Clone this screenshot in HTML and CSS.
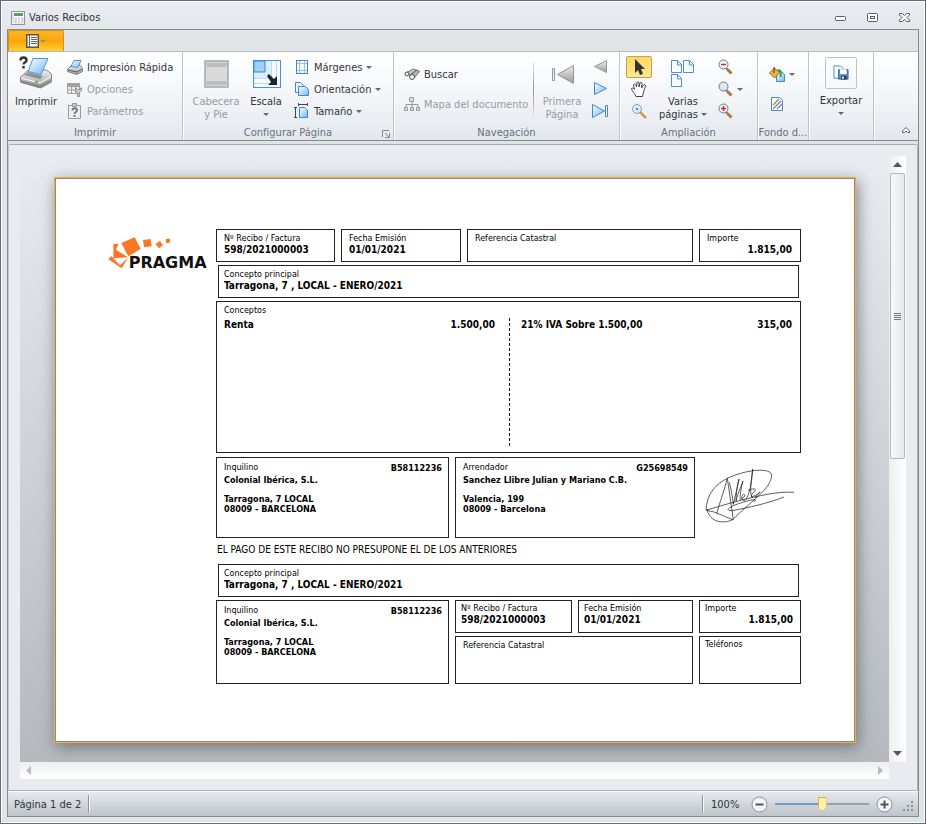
FILE: index.html
```html
<!DOCTYPE html>
<html lang="es">
  <head>
    <meta charset="UTF-8" />
    <meta name="viewport" content="width=device-width, initial-scale=1.0" />
    <title>Varios Recibos</title>
    <link rel="stylesheet" href="styles.css">
  </head>
  <body>
    <!-- shared gradients -->
    <svg class="defs" width="0" height="0" aria-hidden="true">
      <defs>
        <linearGradient id="blue" x1="0" y1="0" x2="1" y2="1">
          <stop offset="0" stop-color="#fff" /><stop offset="1" stop-color="#6db9f6" />
        </linearGradient>
        <linearGradient id="grey" x1="0" y1="0" x2="0" y2="1">
          <stop offset="0" stop-color="#f0f0f0" /><stop offset="1" stop-color="#989898" />
        </linearGradient>
      </defs>
    </svg>

    <header class="titlebar">
      <svg width="14" height="14" viewBox="0 0 14 14">
        <rect x=".5" y=".5" width="13" height="13" fill="#fff" stroke="#8b98a4" />
        <path d="M3 2h9v3H3z" fill="#5f9b6b" />
        <path d="M2 2v10M4 7h8v5H4z" stroke="#c3ccd5" fill="#d6dde4" />
        <path d="M6.500 7v5M9.500 7v5" stroke="#fff" />
      </svg>
      <h1>Varios Recibos</h1>
      <div class="caption">
        <button type="button" aria-label="Minimizar">
          <svg width="13" height="13"><rect x="1.500" y="5.500" width="10" height="4" rx="1" fill="#fff" stroke="#555c66" /></svg>
        </button>
        <button type="button" aria-label="Maximizar">
          <svg width="13" height="13"><rect x="1.500" y="2.500" width="10" height="8" rx="1" fill="#fff" stroke="#555c66" /><rect x="4.500" y="5.500" width="4" height="2" fill="#fff" stroke="#555c66" /></svg>
        </button>
        <button type="button" aria-label="Cerrar">
          <svg width="13" height="13"><path d="M1.500 2.500h3l2 2 2-2h3v1.500l-2.500 2.500 2.500 2.500v1.500h-3l-2-2-2 2h-3V9L4 6.500 1.500 4z" fill="#fff" stroke="#555c66" /></svg>
        </button>
      </div>
    </header>

    <main class="client">
      <div class="tabs">
        <button type="button" class="app-tab" aria-label="Archivo">
          <svg width="20" height="14">
            <rect x=".75" y=".75" width="11.500" height="12.500" fill="#fff" stroke="#5b554a" stroke-width="1.500" />
            <path d="M3.500 1v12M5 3.500h6M5 5.500h6M5 7.500h6M5 9.500h6" stroke="#6b655a" />
            <path d="M14 6h6l-3 3z" fill="#9c8f6c" />
          </svg>
        </button>
      </div>

      <div class="ribbon">
        <section class="group g-print">
          <div class="tools">
            <button type="button" class="big w56">
              <svg width="34" height="34" viewBox="0 0 34 34">
                <path d="M1.500 21l8-7h18l5 4v8l-11 6-20-6z" fill="url(#grey)" stroke="#858585" />
                <path d="M2 22l19 5 11-7" fill="none" stroke="#fff" />
                <path d="M2 24l19 5v3L2 27zM21 29l11-6v3l-11 6z" fill="#707070" opacity=".5" />
                <path d="M14 2.500h15l-7 16-13-3z" fill="url(#blue)" stroke="#5596d2" />
                <path d="M5 19l4-3 15 4-3 3z" fill="#4a4d50" opacity=".5" />
                <circle cx="17.500" cy="26" r="1.500" fill="#62b552" />
                <path d="M1.500 4.500c0-4 6-4 6 0 0 2-3 1.500-3 4M4.500 10v2.500" fill="none" stroke="#333" stroke-width="2.500" />
              </svg>
              <span>Imprimir</span>
            </button>
            <div class="stack">
              <button type="button" class="small">
                <svg width="16" height="16" viewBox="0 0 16 16">
                  <path d="M.5 10.500l4-4h9l2 3v3l-6 3-9-3z" fill="url(#grey)" stroke="#808080" />
                  <path d="M7 1.500h7l-3 7-7-1z" fill="url(#blue)" stroke="#5596d2" />
                  <path d="M1 11l9 2 5-3" fill="none" stroke="#555" />
                </svg>
                Impresión Rápida
              </button>
              <button type="button" class="small" disabled>
                <svg width="16" height="16" viewBox="0 0 16 16">
                  <path d="M.5 2.500h12v10H.5zM1 5.500h12M1 9h9M4.500 3v9M8.500 3v9" fill="#ececec" stroke="#a2a2a2" />
                  <path d="M0 2h13v3H0z" fill="#a2a2a2" />
                  <path d="M8.500 6.500v3l2 2v4h2v-4l2-2v-3l-2 2h-2z" fill="#ccc" stroke="#8f8f8f" />
                </svg>
                Opciones
              </button>
              <button type="button" class="small" disabled>
                <svg width="16" height="16" viewBox="0 0 16 16">
                  <path d="M1.500 2.500h12v13h-12z" fill="#eee" stroke="#999" />
                  <path d="M5.500.5h4v3h-4z" fill="#ccc" stroke="#999" />
                  <path d="M5.500 7.500c0-3 4.500-3 4.500 0C10 9 7.500 9 7.500 11M7.500 12v2" fill="none" stroke="#777" stroke-width="1.800" />
                </svg>
                Parámetros
              </button>
            </div>
          </div>
          <h2>Imprimir</h2>
        </section>

        <section class="group g-setup">
          <div class="tools">
            <button type="button" class="big w52" disabled>
              <svg width="34" height="34" viewBox="0 0 34 34">
                <rect x="6" y="5" width="23" height="26" fill="#d9d9d9" stroke="#a6a6a6" stroke-width="1.500" />
                <path d="M7.500 7h20v4h-20zM7.500 25h20v4h-20z" fill="#bcbcbc" />
              </svg>
              <span>Cabecera<br />y Pie</span>
            </button>
            <button type="button" class="big w48">
              <svg width="34" height="34" viewBox="0 0 34 34">
                <rect x="4.500" y="4.500" width="27" height="27" fill="#f4faff" stroke="#4a90cf" />
                <path d="M5 5h18v18H5z" fill="#d9edfc" />
                <path d="M22.500 5v17.500H5M27.500 5v20M5 27.500h16" fill="none" stroke="#bbdcf5" />
                <path d="M5 5h11v11H5z" fill="#9ed0fa" stroke="#3c86cb" />
                <path d="M18 20l2-2 5 5 3-3v9h-9l3-3z" fill="#222" />
              </svg>
              <span>Escala</span>
              <i class="arrow"></i>
            </button>
            <div class="stack">
              <button type="button" class="small">
                <svg width="16" height="16" viewBox="0 0 16 16">
                  <rect x="2.500" y="1.500" width="11" height="13" fill="#f5faff" stroke="#4587c4" />
                  <path d="M5.500 2v12M10.500 2v12M3 4.500h10M3 11.500h10" stroke="#9bbfe0" />
                </svg>
                Márgenes <i class="arrow"></i>
              </button>
              <button type="button" class="small">
                <svg width="16" height="16" viewBox="0 0 16 16">
                  <path d="M1.500 1.500h5l3 3v7h-8z" fill="#eaf5ff" stroke="#4587c4" />
                  <path d="M4.500 5.500h7l3 3v6h-10z" fill="url(#blue)" stroke="#4587c4" />
                </svg>
                Orientación <i class="arrow"></i>
              </button>
              <button type="button" class="small">
                <svg width="16" height="16" viewBox="0 0 16 16">
                  <path d="M4.500 1.500h9M4.500 0v3M13.500 0v3M1.500 4v11M0 4.500h3M0 14.500h3" stroke="#444" />
                  <path d="M5.500 4.500h5l3 3v7h-8z" fill="url(#blue)" stroke="#3c86cb" />
                </svg>
                Tamaño <i class="arrow"></i>
              </button>
            </div>
          </div>
          <h2>Configurar Página</h2>
          <button type="button" class="launcher" aria-label="Más opciones">
            <svg width="8" height="8"><path d="M.5 7V.5H7M3 3l4 4M7.500 3v4.500H3" fill="none" stroke="#848b95" /></svg>
          </button>
        </section>

        <section class="group g-nav">
          <div class="tools">
            <div class="stack two find">
              <button type="button" class="small">
                <svg width="16" height="16" viewBox="0 0 16 16">
                  <path d="M1.500 7l8-4 3 1-7 5z" fill="#ccc" stroke="#777" />
                  <path d="M6 10l7-6 2.500 1.500L10 12z" fill="#b5b5b5" stroke="#666" />
                  <circle cx="3" cy="8" r="2" fill="#eee" stroke="#555" />
                  <circle cx="8" cy="11" r="2.500" fill="#eee" stroke="#555" />
                </svg>
                Buscar
              </button>
              <button type="button" class="small" disabled>
                <svg width="16" height="16" viewBox="0 0 16 16">
                  <path d="M5.500 1.500h4v4h-4zM.5 11.500h3v3h-3zM6.500 11.500h3v3h-3zM12.500 11.500h3v3h-3z" fill="#ddd" stroke="#999" />
                  <path d="M8 6v5M2 11V8.500h12V11" fill="none" stroke="#999" />
                </svg>
                Mapa del documento
              </button>
            </div>
            <div class="divider"></div>
            <button type="button" class="big w48" disabled>
              <svg width="34" height="34" viewBox="0 0 34 34">
                <path d="M7.500 12.500h2v12h-2z" fill="#eee" stroke="#999" />
                <path d="M28.500 9.500v18l-16-9z" fill="url(#grey)" stroke="#949494" />
              </svg>
              <span>Primera<br />Página</span>
            </button>
            <div class="stack steps">
              <button type="button" class="small icon" disabled aria-label="Página anterior">
                <svg width="16" height="16" viewBox="0 0 16 16"><path d="M14.500 1.500v12L2.500 7.500z" fill="url(#grey)" stroke="#999" /></svg>
              </button>
              <button type="button" class="small icon" aria-label="Página siguiente">
                <svg width="16" height="16" viewBox="0 0 16 16"><path d="M2.500 1.500v12l12-6z" fill="url(#blue)" stroke="#3f88cf" /></svg>
              </button>
              <button type="button" class="small icon" aria-label="Última página">
                <svg width="16" height="16" viewBox="0 0 16 16"><path d="M.5 1.500v13l12-6.500z" fill="url(#blue)" stroke="#3f88cf" /><path d="M13.500 2.500h2v11h-2z" fill="#fff" stroke="#3f88cf" /></svg>
              </button>
            </div>
          </div>
          <h2>Navegación</h2>
        </section>

        <section class="group g-zoom">
          <div class="tools">
            <div class="stack pointers">
              <button type="button" class="small icon active" aria-label="Puntero" aria-pressed="true">
                <svg width="16" height="16" viewBox="0 0 16 16"><path d="M4 0v14l3-3 2 5 3-1-2-5h4z" fill="#333" /></svg>
              </button>
              <button type="button" class="small icon" aria-label="Mano">
                <svg width="16" height="16" viewBox="0 0 16 16"><path d="M5 15.500c-1-3-4-5-4.500-8 1-1 2 0 3 1L2.500 4C3 2 4.500 3 5 4l.5 2L6 1.500C6.500.3 8 .5 8 2v4l1-4c.7-1.200 2-.7 2 .5L10.500 7l2-3c1-1 2.300 0 2 1-1 3-2 6-3 10.500z" fill="#fff" stroke="#444" /></svg>
              </button>
              <button type="button" class="small icon" aria-label="Lupa">
                <svg width="16" height="16" viewBox="0 0 16 16"><path d="M9 9l6 6" stroke="#c99e4e" stroke-width="2.500" /><circle cx="6" cy="6" r="4.500" fill="#d6ebfc" stroke="#929ba8" /><path d="M5 5h2v2H5z" fill="#4385c0" /></svg>
              </button>
            </div>
            <button type="button" class="big w56">
              <svg width="34" height="34" viewBox="0 0 34 34">
                <path d="M5.500 4.500h6l4 4v8h-10zM17.500 4.500h6l4 4v8h-10zM5.500 18.500h6l4 4v8h-10z" fill="#f7fbff" stroke="#4f8fce" />
                <path d="M11.500 5v4h4M23.500 5v4h4M11.500 19v4h4" fill="none" stroke="#4f8fce" />
              </svg>
              <span>Varias<br />páginas <i class="arrow"></i></span>
            </button>
            <div class="stack">
              <button type="button" class="small" aria-label="Alejar">
                <svg width="16" height="16" viewBox="0 0 16 16"><path d="M9 9l2 2" stroke="#777" stroke-width="2" /><path d="M10.500 10.500l4 4" stroke="#a77c39" stroke-width="3" /><circle cx="6.500" cy="5.500" r="4.500" fill="#eef4fb" stroke="#737a85" /><path d="M4 5.500h5" stroke="#c2302f" stroke-width="1.500" /></svg>
              </button>
              <button type="button" class="small" aria-label="Zoom">
                <svg width="16" height="16" viewBox="0 0 16 16"><path d="M9 9l2 2" stroke="#777" stroke-width="2" /><path d="M10.500 10.500l4 4" stroke="#a77c39" stroke-width="3" /><circle cx="6.500" cy="5.500" r="4.500" fill="#d9e9f8" stroke="#737a85" /></svg>
                <i class="arrow"></i>
              </button>
              <button type="button" class="small" aria-label="Acercar">
                <svg width="16" height="16" viewBox="0 0 16 16"><path d="M9 9l2 2" stroke="#777" stroke-width="2" /><path d="M10.500 10.500l4 4" stroke="#a77c39" stroke-width="3" /><circle cx="6.500" cy="5.500" r="4.500" fill="#eef4fb" stroke="#737a85" /><path d="M4 5.500h5M6.500 3v5" stroke="#c2302f" stroke-width="1.500" /></svg>
              </button>
            </div>
          </div>
          <h2>Ampliación</h2>
        </section>

        <section class="group g-back">
          <div class="tools">
            <div class="stack two">
              <button type="button" class="small" aria-label="Color de página">
                <svg width="16" height="16" viewBox="0 0 16 16">
                  <path d="M7.500 5.500h5l3 3v7h-8z" fill="url(#blue)" stroke="#4587c4" />
                  <path d="M.5 7l5-5 5 4.500-5 5.500z" fill="#f3b13c" stroke="#99671c" />
                  <path d="M5 7V1" stroke="#333" />
                  <path d="M9 4c3 0 3 3 2.500 7" stroke="#45993e" stroke-width="2" fill="none" />
                </svg>
                <i class="arrow"></i>
              </button>
              <button type="button" class="small" aria-label="Marca de agua">
                <svg width="16" height="16" viewBox="0 0 16 16">
                  <path d="M2.500 1.500h8l3 3v10h-11z" fill="#fff" stroke="#4587c4" />
                  <path d="M4 9l6-6M4 13l8-8M8 13l5-5" stroke="#8b8b8b" stroke-width="1.500" />
                </svg>
              </button>
            </div>
          </div>
          <h2 title="Fondo de página">Fondo d...</h2>
        </section>

        <section class="group g-export">
          <div class="tools">
            <button type="button" class="big framed w64">
              <svg width="32" height="32" viewBox="0 0 32 32">
                <path d="M8.500 8.500h7l4 4v9h-11z" fill="#fff" stroke="#3c86cb" />
                <path d="M13.500 12.500h10v10h-10z" fill="#5b9bd5" stroke="#26598f" />
                <path d="M15 12h7v5h-7z" fill="#fff" /><path d="M16 19h6v4h-6z" fill="#2b3f55" /><path d="M17 20h2v2h-2z" fill="#fff" />
              </svg>
              <span>Exportar</span>
              <i class="arrow"></i>
            </button>
          </div>
        </section>

        <button type="button" class="collapse" aria-label="Contraer cinta">
          <svg width="10" height="8"><path d="M1.500 5L5 1.500 8.500 5v1.500h-2L5 5 3.500 6.500h-2z" fill="#fff" stroke="#555c66" /></svg>
        </button>
      </div>

      <div class="viewer">
        <div class="viewport">
          <article class="paper">
            <svg class="logo" width="100" height="32" viewBox="324 290 300 96">
              <g fill="#ff7526">
                <path d="M364 308l40-17 18 35-37 22z" />
                <path d="M340 311l16-1-8 18 36 23-44 3z" />
                <path d="M325 357l9-10 26 28 24-23-19 32z" />
                <path d="M429 299l23-3 3 22-23 3zM466 311l14-9 9 13-12 9zM498 296l12-1v12l-12 1z" />
              </g>
              <text x="386" y="384">PRAGMA</text>
            </svg>

            <div class="receipt">
              <div class="row head">
                <div class="box"><small>Nº Recibo / Factura</small><b>598/2021000003</b></div>
                <div class="box"><small>Fecha Emisión</small><b>01/01/2021</b></div>
                <div class="box"><small>Referencia Catastral</small></div>
                <div class="box"><small>Importe</small><b class="amount">1.815,00</b></div>
              </div>
              <div class="box concept"><small>Concepto principal</small><b>Tarragona, 7 , LOCAL - ENERO/2021</b></div>
              <div class="box items">
                <small>Conceptos</small>
                <div class="lines">
                  <p><b>Renta</b><b>1.500,00</b></p>
                  <p><b>21% IVA Sobre 1.500,00</b><b>315,00</b></p>
                </div>
              </div>
              <div class="row parties">
                <div class="box party">
                  <p><small>Inquilino</small><b>B58112236</b></p>
                  <b>Colonial Ibérica, S.L.</b>
                  <address>Tarragona, 7 LOCAL<br />08009 - BARCELONA</address>
                </div>
                <div class="box party">
                  <p><small>Arrendador</small><b>G25698549</b></p>
                  <b>Sanchez Llibre Julian y Mariano C.B.</b>
                  <address>Valencia, 199<br />08009 - Barcelona</address>
                </div>
                <svg class="sign" width="90" height="55" viewBox="765 55 270 165" role="img" aria-label="Firma">
                  <g fill="none" stroke="#222" stroke-width="2.200">
                    <path d="M1032 128c-50-4-110 12-160 24-45 12-80 22-104 30 2-50 30-80 66-97 50-24 130-34 131-8 0 40-70 84-116 132-20 12-52 10-66-6-8-10-12-18-11-25" />
                    <path d="M832 86l18 124M832 86c-10 40-24 75-32 106M770 182c30 4 50 18 80 29" />
                    <path d="M838 98c6 24 10 46 12 66 4-20 12-50 17-76-6 24-9 46-9 66 4-20 14-40 21-60-6 20-10 46-8 58M874 148c8-4 14-12 8-14-8 0-10 20 2 18 10-4 22-48 24-94-4 30-10 74-2 86M894 122c14-6 28-6 20 2s-16 20-4 16 26-20 18-10-18 14-8 14M1002 142c-50 20-110 32-150 40-30 4-20-10 20-22 30-10 54-14 40-4" />
                  </g>
                </svg>
              </div>
              <p class="notice">EL PAGO DE ESTE RECIBO NO PRESUPONE EL DE LOS ANTERIORES</p>
              <div class="box concept"><small>Concepto principal</small><b>Tarragona, 7 , LOCAL - ENERO/2021</b></div>
              <div class="row stub">
                <div class="box party">
                  <p><small>Inquilino</small><b>B58112236</b></p>
                  <b>Colonial Ibérica, S.L.</b>
                  <address>Tarragona, 7 LOCAL<br />08009 - BARCELONA</address>
                </div>
                <div class="box near"><small>Nº Recibo / Factura</small><b>598/2021000003</b></div>
                <div class="box near"><small>Fecha Emisión</small><b>01/01/2021</b></div>
                <div class="box near"><small>Importe</small><b class="amount">1.815,00</b></div>
                <div class="box ref"><small>Referencia Catastral</small></div>
                <div class="box near"><small>Teléfonos</small></div>
              </div>
            </div>
          </article>
        </div>

        <div class="vscroll">
          <svg width="17" height="17"><path d="M4 11h9L8.500 6z" fill="#555" /></svg>
          <div class="track"><div class="thumb"></div></div>
          <svg width="17" height="17"><path d="M4 6h9l-4.500 5z" fill="#555" /></svg>
        </div>
        <div class="hscroll">
          <svg width="17" height="17"><path d="M11 4v9L6 8.500z" fill="#bbb" /></svg>
          <svg width="17" height="17"><path d="M6 4v9l5-4.500z" fill="#bbb" /></svg>
        </div>
      </div>

      <footer class="status">
        <span>Página 1 de 2</span>
        <i class="sep"></i>
        <i class="sep right"></i>
        <label for="zoom">100%</label>
        <button type="button" class="round" aria-label="Reducir zoom">
          <svg width="17" height="17"><circle cx="8.500" cy="8.500" r="7.500" fill="#f3f4f6" stroke="#8c8fa3" /><path d="M4.500 8.500h8" stroke="#50555d" stroke-width="2" /></svg>
        </button>
        <input type="range" id="zoom" min="0" max="200" value="100" />
        <button type="button" class="round" aria-label="Aumentar zoom">
          <svg width="17" height="17"><circle cx="8.500" cy="8.500" r="7.500" fill="#f3f4f6" stroke="#8c8fa3" /><path d="M4.500 8.500h8M8.500 4.500v8" stroke="#50555d" stroke-width="2" /></svg>
        </button>
        <svg class="grip" width="12" height="12"><path d="M8 0h2v2H8zM8 4h2v2H8zM4 4h2v2H4zM8 8h2v2H8zM4 8h2v2H4zM0 8h2v2H0z" fill="#8f949b" /></svg>
      </footer>
    </main>
  </body>
</html>
```
FILE: styles.css
```css
* {
  box-sizing: border-box;
}
body {
  display: flex;
  flex-direction: column;
  min-height: 100vh;
  margin: 0;
  padding: 0 6px 6px;
  border: 1px solid #646b76;
  box-shadow: inset 0 0 0 1px #fff;
  background: linear-gradient(#ebedf2, #e0e4e6 40px);
  color: #30343b;
  font-family: "DejaVu Sans Condensed", "DejaVu Sans", sans-serif;
  font-size: 11px;
  line-height: 13px;
}
.defs {
  position: absolute;
}
svg {
  display: block;
  flex: none;
}
h1,
h2,
p {
  margin: 0;
  font-size: 11px;
  font-weight: normal;
}
button {
  margin: 0;
  padding: 0;
  border: 0;
  background: none;
  color: inherit;
  font: inherit;
  cursor: pointer;
}
button:disabled {
  color: #989b9f;
  cursor: default;
}

/* title bar */
.titlebar {
  display: flex;
  align-items: center;
  gap: 4px;
  height: 28px;
  padding: 5px 0 0 4px;
}
.caption {
  display: flex;
  gap: 19px;
  margin-left: auto;
  padding-right: 8px;
}
.client {
  display: flex;
  flex-direction: column;
  flex: 1;
  border: 1px solid #858b8d;
}

/* ribbon */
.tabs {
  height: 21px;
  background: #e0e4e6;
}
.app-tab {
  display: flex;
  align-items: center;
  justify-content: center;
  width: 56px;
  height: 21px;
  border: 1px solid #e08a1e;
  border-bottom: 0;
  border-radius: 2px 2px 0 0;
  background: linear-gradient(#fbb62d, #fba50a 50%, #ffd02e);
}
.ribbon {
  display: flex;
  height: 90px;
  border-top: 1px solid #b6bbc1;
  border-bottom: 1px solid #85898f;
  background: linear-gradient(#fff, #f3f5f8 50%, #e3e7ec);
}
.group {
  position: relative;
  display: flex;
  flex-direction: column;
  flex: none;
  border-right: 1px solid #c0c4ca;
  box-shadow: 1px 0 #fff;
}
.group h2 {
  height: 14px;
  color: #696f80;
  text-align: center;
  white-space: nowrap;
}
.tools {
  display: flex;
  height: 74px;
  padding-top: 4px;
}
.g-print {
  width: 175px;
}
.g-setup {
  width: 211px;
}
.g-nav {
  width: 226px;
}
.g-zoom {
  width: 138px;
}
.g-back {
  width: 51px;
}
.g-export {
  width: 65px;
}
.g-setup .tools,
.g-nav .tools,
.g-back .tools {
  padding-left: 7px;
}
.g-zoom .tools {
  gap: 3px;
  padding-left: 6px;
}
.g-setup .stack,
.g-back .stack {
  margin-left: 1px;
}
.big {
  display: flex;
  flex-direction: column;
  align-items: center;
}
.big span {
  margin-top: 5px;
  white-space: nowrap;
}
.w48 {
  width: 48px;
}
.w52 {
  width: 52px;
}
.w56 {
  width: 56px;
}
.w64 {
  width: 64px;
}
.framed svg {
  margin-top: 1px;
  border: 1px solid #bfc3c9;
  border-radius: 2px;
}
.small {
  display: flex;
  align-items: center;
  gap: 4px;
  height: 22px;
  padding: 0 3px;
  white-space: nowrap;
}
.icon {
  justify-content: center;
  width: 100%;
}
.two {
  padding-top: 3px;
}
.two .small {
  height: 30px;
}
.find {
  width: 132px;
}
.steps {
  width: 28px;
}
.pointers {
  width: 26px;
}
.divider {
  width: 1px;
  height: 56px;
  margin: 6px 4px 0 0;
  background: linear-gradient(#e4e6e9, #8d9299, #e4e6e9);
}
.active {
  border: 1px solid #c3a14c;
  border-radius: 2px;
  background: linear-gradient(#ffd765, #ffe793);
}
.arrow {
  display: inline-block;
  border: 3px solid transparent;
  border-top-color: #62666d;
  border-bottom: 0;
  vertical-align: 2px;
}
.big > .arrow {
  margin-top: 5px;
}
.launcher {
  position: absolute;
  right: 3px;
  bottom: 2px;
}
.collapse {
  align-self: flex-end;
  margin: 0 7px 6px auto;
}

/* preview area */
.viewer {
  display: grid;
  grid-template-columns: 1fr 17px;
  grid-template-rows: 1fr 17px;
  flex: 1;
  margin-top: 3px;
  padding: 11px;
  border: 1px solid #a9aeb6;
  border-left-color: #c3c7cd;
  border-radius: 2px;
  background: #e8ebf0;
}
.viewport {
  padding: 21px 33px 19px 34px;
  overflow: hidden;
  background: linear-gradient(#e8ebf0, #b5b9bd);
}
.paper {
  display: flex;
  gap: 8px;
  padding: 51px 54px 58px 53px;
  border: 1px solid #f5b02a;
  background: #fff;
  box-shadow: inset 0 0 0 1px #858b93, 2px 4px 14px rgba(75, 80, 84, 0.65);
  color: #000;
}
.logo {
  margin-top: 8px;
  overflow: visible;
}
.logo text {
  fill: #111;
  font: bold 48px "DejaVu Sans", sans-serif;
}
.receipt {
  display: flex;
  flex-direction: column;
  flex: 1;
  gap: 3px;
  font-size: 10px;
}
.row {
  display: grid;
  gap: 6px;
}
.head {
  grid-template-columns: 119px 120px 1fr 102px;
}
.parties {
  grid-template-columns: 233px 240px 1fr;
  margin-top: 1px;
}
.stub {
  grid-template-columns: 233px 117px 1fr 102px;
  grid-template-rows: 33px 48px;
  row-gap: 3px;
}
.stub .party {
  grid-row: span 2;
}
.ref {
  grid-column: span 2;
}
.box {
  display: flex;
  flex-direction: column;
  min-height: 33px;
  padding: 4px 8px 3px 7px;
  border: 1px solid #222;
  line-height: 12px;
}
.box small {
  font-family: "DejaVu Sans", sans-serif;
  font-size: 8px;
  line-height: 10px;
}
.near {
  padding: 3px 7px 3px 5px;
}
.amount {
  align-self: flex-end;
}
.concept {
  margin: 0 2px;
  padding-left: 5px;
}
.items {
  height: 152px;
}
.lines {
  display: grid;
  grid-template-columns: 285px 1fr;
  flex: 1;
  margin: 2px 0 3px;
}
.lines p {
  display: flex;
  justify-content: space-between;
  padding: 1px 14px 0 0;
  font-size: 10px;
}
.lines p + p {
  padding: 1px 0 0 11px;
  border-left: 1px dashed #000;
}
.party {
  min-height: 81px;
  padding: 4px 6px 4px 7px;
  font-size: 9px;
}
.party p {
  display: flex;
  align-items: center;
  justify-content: space-between;
  font-size: 9px;
}
.party address {
  margin-top: 8px;
  font-style: normal;
  font-weight: bold;
  line-height: 10px;
}
.sign {
  margin: 11px 0 0 4px;
}
.notice {
  margin: 2px 0 5px 1px;
  font-size: 10px;
  line-height: 13px;
}

/* scroll bars */
.vscroll {
  display: flex;
  flex-direction: column;
  background: linear-gradient(90deg, #eee, #fff);
}
.track {
  flex: 1;
  padding: 0 1px;
}
.thumb {
  display: flex;
  align-items: center;
  justify-content: center;
  height: 50%;
  border: 1px solid #b3b7bc;
  border-radius: 2px;
  background: linear-gradient(90deg, #f8f8f8, #e6e9e8);
}
.thumb::before {
  content: "";
  width: 7px;
  height: 7px;
  background: repeating-linear-gradient(#777 0 1px, transparent 1px 2px);
}
.hscroll {
  display: flex;
  justify-content: space-between;
  background: linear-gradient(#eee, #fff);
}

/* status bar */
.status {
  display: flex;
  align-items: center;
  height: 25px;
  padding: 0 3px 0 6px;
  border-top: 1px solid #fff;
  background: linear-gradient(#e6e9ec, #bfc4ca);
}
.sep {
  width: 1px;
  height: 18px;
  margin-left: 7px;
  background: #8f959d;
  box-shadow: 1px 0 #f5f6f8;
}
.right {
  margin: 0 8px 0 auto;
}
.status label {
  width: 40px;
}
#zoom {
  width: 94px;
  height: 16px;
  margin: 0 7px;
  appearance: none;
  background: linear-gradient(90deg, #6f9ccb 50%, #9aa0a8 50%) center / 100% 2px no-repeat;
}
#zoom::-webkit-slider-thumb {
  width: 9px;
  height: 14px;
  appearance: none;
  border: 1px solid #dfae3c;
  background: #fff0a8;
  clip-path: polygon(0 0, 100% 0, 100% 70%, 50% 100%, 0 70%);
}
.grip {
  margin: 6px 0 0 10px;
}
```
